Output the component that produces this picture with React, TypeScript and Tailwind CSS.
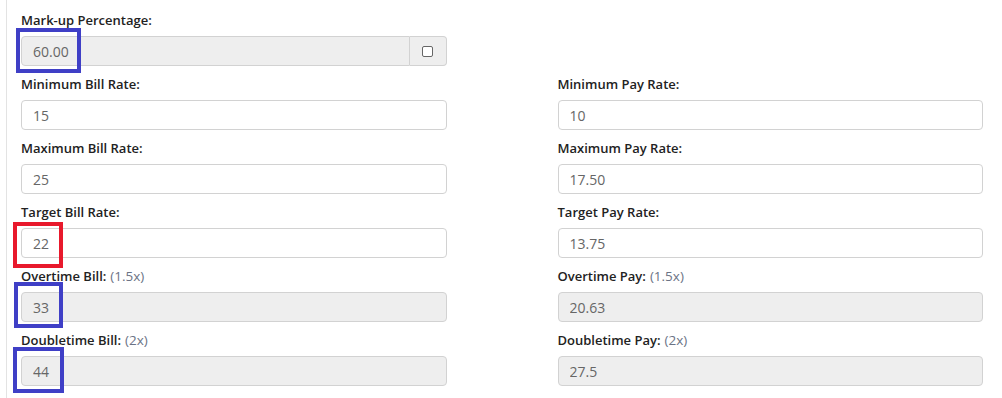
type Field = {
  label: string;
  hint?: string;
  value: string;
  readOnly?: boolean;
};

const billFields: Field[] = [
  { label: "Minimum Bill Rate:", value: "15" },
  { label: "Maximum Bill Rate:", value: "25" },
  { label: "Target Bill Rate:", value: "22" },
  { label: "Overtime Bill:", hint: "(1.5x)", value: "33", readOnly: true },
  { label: "Doubletime Bill:", hint: "(2x)", value: "44", readOnly: true },
];

const payFields: Field[] = [
  { label: "Minimum Pay Rate:", value: "10" },
  { label: "Maximum Pay Rate:", value: "17.50" },
  { label: "Target Pay Rate:", value: "13.75" },
  { label: "Overtime Pay:", hint: "(1.5x)", value: "20.63", readOnly: true },
  { label: "Doubletime Pay:", hint: "(2x)", value: "27.5", readOnly: true },
];

function RateField({ label, hint, value, readOnly }: Field) {
  return (
    <div className="mb-[8px]">
      <label className="block h-[20px] mb-[6px] text-[13px] leading-[20px] font-semibold text-[#222]">
        {label}
        {hint && <span className="ml-1 text-[13.5px] font-normal text-[#6b7385]">{hint}</span>}
      </label>
      <input
        type="text"
        readOnly
        defaultValue={value}
        className={`block w-full h-[30px] rounded-[4px] border border-[#d2d2d2] px-[11px] text-[14px] text-[#666] outline-none ${
          readOnly ? "bg-[#eeeeee]" : "bg-white"
        }`}
      />
    </div>
  );
}

export default function App() {
  return (
    <div
      className="relative w-[1002px] h-[398px] bg-white overflow-hidden"
      style={{ fontFamily: '"Open Sans", "Liberation Sans", sans-serif' }}
    >
      <div className="ml-[6px] h-full border-l border-[#e3e3e3] pl-[14px] pr-[19px] pt-[10px]">
        {/* Mark-up */}
        <div className="grid grid-cols-2 gap-x-[111px]">
          <div className="mb-[8px]">
            <label className="block h-[20px] mb-[6px] text-[13px] leading-[20px] font-semibold text-[#222]">
              Mark-up Percentage:
            </label>
            <div className="flex h-[30px]">
              <input
                type="text"
                readOnly
                defaultValue="60.00"
                className="flex-1 min-w-0 h-full rounded-l-[4px] border border-[#d2d2d2] bg-[#eeeeee] px-[11px] text-[14px] text-[#666] outline-none"
              />
              <div className="flex w-[37px] items-center justify-center rounded-r-[4px] border border-l-0 border-[#d2d2d2] bg-[#eeeeee]">
                <span className="block h-[11px] w-[11px] rounded-[2px] border border-[#666] bg-white" />
              </div>
            </div>
          </div>
          <div />
        </div>

        <div className="grid grid-cols-2 gap-x-[111px]">
          <div>
            {billFields.map((f) => (
              <RateField key={f.label} {...f} />
            ))}
          </div>
          <div>
            {payFields.map((f) => (
              <RateField key={f.label} {...f} />
            ))}
          </div>
        </div>
      </div>

      {/* annotation boxes */}
      <div className="absolute left-[16px] top-[28px] w-[65px] h-[45px] border-[4px] border-[#3f3fc6]" />
      <div className="absolute left-[13px] top-[222px] w-[50px] h-[46px] border-[4px] border-[#e8192c]" />
      <div className="absolute left-[14px] top-[282px] w-[49px] h-[46px] border-[4px] border-[#3f3fc6]" />
      <div className="absolute left-[13px] top-[347px] w-[51px] h-[46px] border-[4px] border-[#3f3fc6]" />
    </div>
  );
}
